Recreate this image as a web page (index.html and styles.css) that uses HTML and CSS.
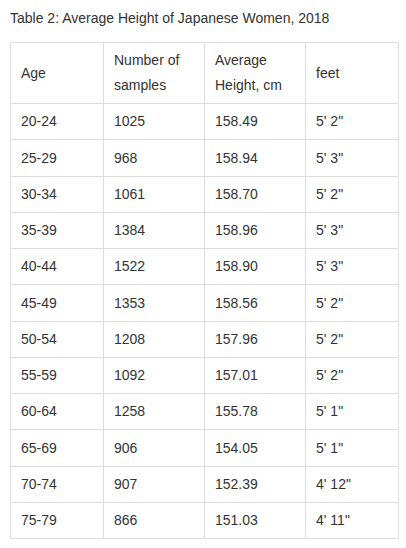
FILE: index.html
```html
<!DOCTYPE html>
<html>
<head>
<meta charset="utf-8">
<link rel="stylesheet" href="styles.css">
</head>
<body>
<p class="caption">Table 2: Average Height of Japanese Women, 2018</p>
<table class="data">
<colgroup>
<col class="c-age"><col class="c-num"><col class="c-avg"><col class="c-feet">
</colgroup>
<thead>
<tr><td>Age</td><td>Number of<br>samples</td><td>Average<br>Height, cm</td><td>feet</td></tr>
</thead>
<tbody>
<tr><td>20-24</td><td>1025</td><td>158.49</td><td>5' 2"</td></tr>
<tr><td>25-29</td><td>968</td><td>158.94</td><td>5' 3"</td></tr>
<tr><td>30-34</td><td>1061</td><td>158.70</td><td>5' 2"</td></tr>
<tr><td>35-39</td><td>1384</td><td>158.96</td><td>5' 3"</td></tr>
<tr><td>40-44</td><td>1522</td><td>158.90</td><td>5' 3"</td></tr>
<tr><td>45-49</td><td>1353</td><td>158.56</td><td>5' 2"</td></tr>
<tr><td>50-54</td><td>1208</td><td>157.96</td><td>5' 2"</td></tr>
<tr><td>55-59</td><td>1092</td><td>157.01</td><td>5' 2"</td></tr>
<tr><td>60-64</td><td>1258</td><td>155.78</td><td>5' 1"</td></tr>
<tr><td>65-69</td><td>906</td><td>154.05</td><td>5' 1"</td></tr>
<tr><td>70-74</td><td>907</td><td>152.39</td><td>4' 12"</td></tr>
<tr><td>75-79</td><td>866</td><td>151.03</td><td>4' 11"</td></tr>
</tbody>
</table>
</body>
</html>
```
FILE: styles.css
```css
html, body {
  margin: 0;
  background: #fff;
}
body {
  padding: 7px 10px 0;
  font-family: "Liberation Sans", Arial, sans-serif;
  color: #333;
}
.caption {
  margin: 0 0 13px;
  font-size: 14px;
  line-height: 22px;
}
.data {
  border-collapse: collapse;
  table-layout: fixed;
  width: 389px;
  font-size: 14px;
}
.c-age { width: 93px; }
.c-num { width: 101px; }
.c-avg { width: 101px; }
.c-feet { width: 93px; }
.data td {
  border: 1px solid #ddd;
  padding: 5.25px 10px;
  line-height: 24.75px;
  vertical-align: middle;
  text-align: left;
}
```
